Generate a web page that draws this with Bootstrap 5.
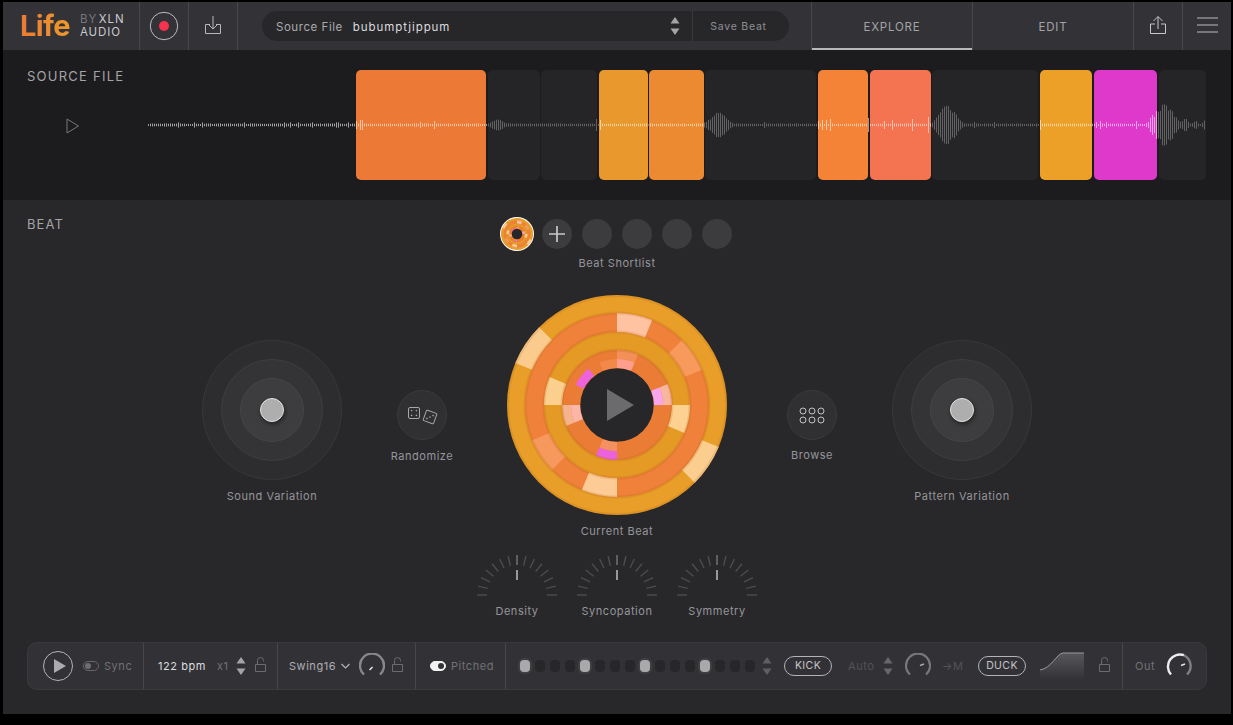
<!doctype html>
<html lang="en">
<head>
<meta charset="utf-8">
<title>Life by XLN Audio</title>
<link href="https://cdn.jsdelivr.net/npm/bootstrap@5.3.0/dist/css/bootstrap.min.css" rel="stylesheet">
<style>
html,body{height:100%;background:#000;overflow:hidden}
body{font-family:Inter,"Liberation Sans",sans-serif;font-size:11px;letter-spacing:.55px;color:#8f8f92;line-height:14px}
svg{display:block;flex:none}
.lf-app{margin:2px 0 0 3px;width:1228px;height:712px}
.lf-head{height:48px;background:#323237;color:#aaa}
.lf-cell{height:48px;border-right:1px solid #48484c;flex:none}
.lf-logo{width:137px;padding-left:17px}
.lf-life{font-size:29px;font-weight:700;letter-spacing:-.6px;line-height:30px;width:60px;background:linear-gradient(90deg,#ea7a34,#efa02a);-webkit-background-clip:text;background-clip:text;color:transparent}
.lf-brand{font-size:11.5px;line-height:13px;letter-spacing:.9px;color:#c9c9cc;word-spacing:-2.5px}
.lf-brand span{color:#77777b}
.lf-sq{width:49px}
.lf-sq48{width:49px;border-right:0}
.lf-iconup{margin-bottom:3px}
.lf-menuicon{margin-bottom:2px}
.lf-picker{flex:none;width:574px;padding:0 22px 0 24px;border-right:1px solid #48484c;height:48px}
.lf-pill{height:30px;background:#27272a;border-radius:15px;padding-left:14px;font-size:11.5px}
.lf-pilltxt{margin-top:2px}
.lf-pill b{font-weight:400;color:#dcdcdf;margin-left:10px;letter-spacing:.95px}
.lf-save{border-left:1px solid #39393c;width:97px;height:30px;color:#8f8f92;font-size:10.5px;letter-spacing:.75px;padding:2px 5px 0 0}
.lf-tab{width:161px;font-size:11.5px;letter-spacing:.8px;color:#a4a4a7;padding-top:2px}
.lf-tab-on{box-shadow:inset 0 -2px 0 #b8b8ba}
.lf-source{height:150px;background:#1c1c1e;padding:20px 25px 0 0}
.lf-title{font-size:13px;letter-spacing:1.25px;color:#a4a4a7;line-height:16px;margin-top:-2px}
.lf-srcleft{width:352px;flex:none;padding:0 0 0 24px}
.lf-playout{margin:34px 0 0 39px}
.lf-tracks{flex:1;height:110px}
.lf-blk{height:110px;border-radius:5px;background:#252527;flex:none}
.lf-wave{position:absolute;left:0;top:50px}
.lf-beat{background:#28282a;height:514px;padding:0 24px;color:#96969a}
.lf-beathead{display:grid;grid-template-columns:1fr auto 1fr;height:95px;padding-top:17px}
.lf-beattitle{font-size:13px;letter-spacing:1.1px;color:#a4a4a7}
.lf-slots{gap:10px;height:34px;margin-left:-1px;margin-right:1px}
.lf-slot{width:30px;height:30px;background:#3c3c3e}
.lf-slotfirst{width:34px;height:34px;margin-right:-2px;background:#fff;padding:1px}
.lf-sllabel{margin-top:5px;height:14px}
.lf-colside{width:150px;flex:none}
.lf-colmid{width:240px;flex:none}
.lf-colpad{padding-top:45px}
.lf-colbtn{padding-top:95px}
.lf-r1{width:140px;height:140px;background:#2d2d2f;border:1px solid #38383a}
.lf-r2{width:102px;height:102px;background:#343436;border:1px solid #3e3e40}
.lf-r3{width:64px;height:64px;background:#3d3d3f;border:1px solid #454547}
.lf-hnd{width:24px;height:24px;background:#aeaeae;border:1px solid #e2e2e2;box-shadow:1px 2px 4px rgba(0,0,0,.45)}
.lf-lab1{margin-top:9px}
.lf-roundbtn{width:50px;height:50px;background:#303033;border:1px solid #3a3a3c}
.lf-lab2{margin-top:9px}
.lf-lab2b{margin-top:8px}
.lf-lab3{margin-top:9px}
.lf-dials{margin-top:16px}
.lf-dial{width:100px}
.lf-diallab{margin-top:8px}
.lf-bar{margin-top:24px;height:48px;background:#323236;border:1px solid #3a3a3e;border-radius:10px;width:1180px;color:#717175}
.lf-bc{height:46px;border-right:1px solid #47474b;flex:none}
.lf-bc1{width:116px;padding-left:15px}
.lf-bc2{width:134px;padding-left:14px}
.lf-bc3{width:138px;padding-left:11px}
.lf-bc4{width:90px;padding-left:14px}
.lf-bc5{width:617px;padding-left:14px}
.lf-bc6{flex:1;padding-left:12px;border-right:0}
.lf-tog{width:16px;height:10px;border:1px solid #67676b;border-radius:5px;padding:0 1px}
.lf-tog i{display:block;width:6px;height:6px;border-radius:50%;background:#6e6e72}
.lf-togon{background:#f2f2f2;border-color:#f2f2f2;justify-content:end}
.lf-togon i{background:#333}
.lf-lit{color:#dcdcdf}
.lf-swing{color:#aeaeb2;width:47px;white-space:nowrap}
.lf-dim{color:#535357}
.lf-steps{gap:5px}
.lf-step{width:10px;height:12px;border-radius:4px;background:#27272a}
.lf-stepon{background:#a9a9ab;box-shadow:0 0 0 2px #3f3f42}
.lf-tagpill{width:48px;height:20px;border:1px solid #b4b4b8;border-radius:10px;color:#c4c4c8;font-size:10.5px;letter-spacing:.4px}
.lf-lockup{margin-bottom:4px}
.lf-m5{margin-left:5px}.lf-m6{margin-left:6px}.lf-m7{margin-left:7px}.lf-m8{margin-left:8px}.lf-m9{margin-left:9px}
.lf-m10{margin-left:10px}.lf-m11{margin-left:11px}.lf-m12{margin-left:12px}.lf-m14{margin-left:14px}.lf-m15{margin-left:15px}.lf-m16{margin-left:16px}
.lf-w20{width:20px}.lf-w26{width:26px}.lf-w48{width:48px}.lf-w12{width:12px}
</style>
</head>
<body>
<div class="lf-app">
  <header class="lf-head d-flex">
    <div class="lf-cell lf-logo d-flex align-items-center">
      <div class="lf-life">Life</div>
      <div class="lf-brand"><span>BY</span> XLN<br>AUDIO</div>
    </div>
    <div class="lf-cell lf-sq d-flex align-items-center justify-content-center">
      <svg width="30" height="30" viewBox="0 0 30 30"><circle cx="15" cy="15" r="13.7" fill="none" stroke="#bdbdc0" stroke-width="1"/><circle cx="15" cy="15" r="5" fill="#f6324f"/></svg>
    </div>
    <div class="lf-cell lf-sq d-flex align-items-center justify-content-center">
      <svg class="lf-iconup" width="16" height="18" viewBox="0 0 16 18" fill="none" stroke="#b8b8bb"><path d="M8 0V13M3.5 8.5L8 13l4.5-4.5M5 8.5H.5v9h15v-9H11"/></svg>
    </div>
    <div class="lf-picker d-flex align-items-center">
      <div class="lf-pill d-flex align-items-center flex-fill">
        <span class="lf-pilltxt">Source File</span><b class="lf-pilltxt">bubumptjippum</b>
        <span class="ms-auto me-2 pe-1">
          <svg width="10" height="18" viewBox="0 0 10 18" fill="#a4a4a7"><path d="M5 0l4.5 6.5h-9zM5 18l4.5-6.5h-9z"/></svg>
        </span>
        <div class="lf-save d-flex align-items-center justify-content-center">Save Beat</div>
      </div>
    </div>
    <div class="lf-cell lf-tab lf-tab-on d-flex align-items-center justify-content-center">EXPLORE</div>
    <div class="lf-cell lf-tab d-flex align-items-center justify-content-center">EDIT</div>
    <div class="lf-cell lf-sq d-flex align-items-center justify-content-center">
      <svg class="lf-iconup" width="16" height="18" viewBox="0 0 16 18" fill="none" stroke="#c8c8cb"><path d="M8 13V.8M3.5 5L8 .5 12.5 5M5 8H.5v9.5h15V8H11"/></svg>
    </div>
    <div class="lf-sq lf-sq48 d-flex align-items-center justify-content-center">
      <svg class="lf-menuicon" width="21" height="16" viewBox="0 0 21 16" stroke="#bcbcbf"><path d="M0 1h21M0 8h21M0 15h21"/></svg>
    </div>
  </header>

  <section class="lf-source d-flex position-relative">
    <div class="lf-srcleft">
      <div class="lf-title">SOURCE FILE</div>
      <div class="lf-playout"><svg width="14" height="16" viewBox="0 0 14 16"><path d="M1 1l11.5 7L1 15z" fill="none" stroke="#77777b"/></svg></div>
    </div>
    <div class="lf-tracks d-flex" id="lfTracks"></div>
    <svg class="lf-wave" id="lfWave" width="1228" height="50" viewBox="0 0 1228 50"></svg>
  </section>

  <section class="lf-beat">
    <div class="lf-beathead">
      <div class="lf-beattitle">BEAT</div>
      <div class="text-center">
        <div class="lf-slots d-flex align-items-center">
          <div class="lf-slotfirst rounded-circle"><svg class="lf-wheel" width="32" height="32" viewBox="-110 -110 220 220"></svg></div>
          <div class="lf-slot rounded-circle d-flex align-items-center justify-content-center">
            <svg width="16" height="16" viewBox="0 0 16 16" stroke="#c8c8ca" stroke-width="1.7"><path d="M8 0v16M0 8h16"/></svg>
          </div>
          <div class="lf-slot rounded-circle"></div>
          <div class="lf-slot rounded-circle"></div>
          <div class="lf-slot rounded-circle"></div>
          <div class="lf-slot rounded-circle"></div>
        </div>
        <div class="lf-sllabel">Beat Shortlist</div>
      </div>
      <div></div>
    </div>

    <div class="d-flex justify-content-center">
      <div class="lf-colside lf-colpad text-center">
        <div class="d-flex justify-content-center"><div class="lf-r1 rounded-circle d-flex align-items-center justify-content-center"><div class="lf-r2 rounded-circle d-flex align-items-center justify-content-center"><div class="lf-r3 rounded-circle d-flex align-items-center justify-content-center"><div class="lf-hnd rounded-circle"></div></div></div></div></div>
        <div class="lf-lab1">Sound Variation</div>
      </div>
      <div class="lf-colside lf-colbtn text-center">
        <div class="d-flex justify-content-center"><div class="lf-roundbtn rounded-circle d-flex align-items-center justify-content-center">
          <svg width="36" height="20" viewBox="0 0 36 20" fill="none" stroke="#a8a8ab">
            <rect x="4.5" y="2.5" width="11" height="11" rx="1.5"/>
            <g fill="#a8a8ab" stroke="none"><circle cx="7.6" cy="5.6" r=".8"/><circle cx="12.4" cy="5.6" r=".8"/><circle cx="7.6" cy="10.4" r=".8"/><circle cx="12.4" cy="10.4" r=".8"/></g>
            <g transform="rotate(20 26 12)"><rect x="20.5" y="6.5" width="11" height="11" rx="1"/><g fill="#a8a8ab" stroke="none"><circle cx="23.6" cy="14.4" r=".8"/><circle cx="26" cy="12" r=".8"/><circle cx="28.4" cy="9.6" r=".8"/></g></g>
          </svg>
        </div></div>
        <div class="lf-lab2">Randomize</div>
      </div>
      <div class="lf-colmid text-center">
        <div class="d-flex justify-content-center position-relative">
          <svg class="lf-wheel" width="220" height="220" viewBox="-110 -110 220 220"></svg>
          <svg class="position-absolute top-50 start-50 translate-middle" width="40" height="40" viewBox="0 0 40 40"><path d="M10 4L37 20 10 36z" fill="#6b6b6d"/></svg>
        </div>
        <div class="lf-lab3">Current Beat</div>
      </div>
      <div class="lf-colside lf-colbtn text-center">
        <div class="d-flex justify-content-center"><div class="lf-roundbtn rounded-circle d-flex align-items-center justify-content-center">
          <svg width="26" height="17" viewBox="0 0 26 17" fill="none" stroke="#c4c4c7"><circle cx="4" cy="4" r="3"/><circle cx="13" cy="4" r="3"/><circle cx="22" cy="4" r="3"/><circle cx="4" cy="13" r="3"/><circle cx="13" cy="13" r="3"/><circle cx="22" cy="13" r="3"/></svg>
        </div></div>
        <div class="lf-lab2b">Browse</div>
      </div>
      <div class="lf-colside lf-colpad text-center">
        <div class="d-flex justify-content-center"><div class="lf-r1 rounded-circle d-flex align-items-center justify-content-center"><div class="lf-r2 rounded-circle d-flex align-items-center justify-content-center"><div class="lf-r3 rounded-circle d-flex align-items-center justify-content-center"><div class="lf-hnd rounded-circle"></div></div></div></div></div>
        <div class="lf-lab1">Pattern Variation</div>
      </div>
    </div>

    <div class="lf-dials d-flex justify-content-center">
      <div class="lf-dial text-center"><div class="d-flex justify-content-center"><svg class="lf-dialsvg" width="82" height="42" viewBox="-41 -41 82 42"></svg></div><div class="lf-diallab">Density</div></div>
      <div class="lf-dial text-center"><div class="d-flex justify-content-center"><svg class="lf-dialsvg" width="82" height="42" viewBox="-41 -41 82 42"></svg></div><div class="lf-diallab">Syncopation</div></div>
      <div class="lf-dial text-center"><div class="d-flex justify-content-center"><svg class="lf-dialsvg" width="82" height="42" viewBox="-41 -41 82 42"></svg></div><div class="lf-diallab">Symmetry</div></div>
    </div>

    <div class="lf-bar d-flex align-items-center">
      <div class="lf-bc lf-bc1 d-flex align-items-center">
        <svg width="30" height="30" viewBox="0 0 30 30"><circle cx="15" cy="15" r="14.5" fill="none" stroke="#b4b4b8"/><path d="M11 8l12 7-12 7z" fill="#acacb0"/></svg>
        <div class="lf-tog d-flex align-items-center lf-m10"><i></i></div>
        <span class="lf-m5">Sync</span>
      </div>
      <div class="lf-bc lf-bc2 d-flex align-items-center">
        <span class="lf-lit lf-w48 text-nowrap">122 bpm</span>
        <span class="lf-m11 lf-w12">x1</span>
        <svg class="lf-m7" width="10" height="18" viewBox="0 0 10 18" fill="#a4a4a7"><path d="M5 0l4.5 6.5h-9zM5 18l4.5-6.5h-9z"/></svg>
        <svg class="lf-m9 lf-lockup" width="11" height="15" viewBox="0 0 11 15" fill="none" stroke="#6c6c70"><path d="M.5 7.5h10v7H.5zM2.5 7.5V3.5a3 3 0 0 1 6 0v1"/></svg>
      </div>
      <div class="lf-bc lf-bc3 d-flex align-items-center">
        <span class="lf-swing">Swing16</span>
        <svg class="lf-m5" width="9" height="6" viewBox="0 0 9 6" fill="none" stroke="#b4b4b8" stroke-width="1.2"><path d="M.5 1l4 4 4-4"/></svg>
        <svg class="lf-m9" width="26" height="26" viewBox="0 0 26 26" fill="none"><path d="M5 21.5A12 12 0 1 1 21 21.5" stroke="#87878b" stroke-width="2.4"/><path d="M10.5 17l3-3" stroke="#e6e6e8" stroke-width="1.6"/></svg>
        <svg class="lf-m7 lf-lockup" width="11" height="15" viewBox="0 0 11 15" fill="none" stroke="#6c6c70"><path d="M.5 7.5h10v7H.5zM2.5 7.5V3.5a3 3 0 0 1 6 0v1"/></svg>
      </div>
      <div class="lf-bc lf-bc4 d-flex align-items-center">
        <div class="lf-tog lf-togon d-flex align-items-center"><i></i></div>
        <span class="lf-m5">Pitched</span>
      </div>
      <div class="lf-bc lf-bc5 d-flex align-items-center">
        <div class="lf-steps d-flex" id="lfSteps"></div>
        <svg class="lf-m7" width="10" height="18" viewBox="0 0 10 18" fill="#5f5f63"><path d="M5 0l4.5 6.5h-9zM5 18l4.5-6.5h-9z"/></svg>
        <div class="lf-tagpill lf-m12 d-flex align-items-center justify-content-center">KICK</div>
        <span class="lf-dim lf-m16 lf-w26">Auto</span>
        <svg class="lf-m9" width="10" height="18" viewBox="0 0 10 18" fill="#67676b"><path d="M5 0l4.5 6.5h-9zM5 18l4.5-6.5h-9z"/></svg>
        <svg class="lf-m12" width="26" height="26" viewBox="0 0 26 26" fill="none"><path d="M5 21.5A12 12 0 1 1 21 21.5" stroke="#77777b" stroke-width="2.2"/><path d="M15 12.5l4-1.5" stroke="#a8a8ac" stroke-width="1.4"/></svg>
        <span class="lf-dim lf-m11 lf-w20 text-nowrap">→M</span>
        <div class="lf-tagpill lf-m16 d-flex align-items-center justify-content-center">DUCK</div>
        <svg class="lf-m14" width="44" height="28" viewBox="0 0 44 28"><defs><linearGradient id="lfCurve" x1="0" y1="0" x2="0" y2="1"><stop offset="0" stop-color="#58585c"/><stop offset="1" stop-color="#323236"/></linearGradient></defs><path d="M0 18C12 16 16 2 23 1H44V28H0z" fill="url(#lfCurve)"/><path d="M0 18C12 16 16 2 23 1H44" fill="none" stroke="#98989c"/></svg>
        <svg class="lf-m15 lf-lockup" width="11" height="15" viewBox="0 0 11 15" fill="none" stroke="#6c6c70"><path d="M.5 7.5h10v7H.5zM2.5 7.5V3.5a3 3 0 0 1 6 0v1"/></svg>
      </div>
      <div class="lf-bc lf-bc6 d-flex align-items-center">
        <span class="lf-w20">Out</span>
        <svg class="lf-m11" width="26" height="26" viewBox="0 0 26 26" fill="none"><path d="M21 21.5A12 12 0 0 0 18 2.2" stroke="#7f7f83" stroke-width="2.4"/><path d="M5 21.5A12 12 0 0 1 18 2.2" stroke="#ececee" stroke-width="2.4"/><path d="M15 12.5l4-1.5" stroke="#e6e6e8" stroke-width="1.4"/></svg>
      </div>
    </div>
  </section>
</div>

<script src="https://cdn.jsdelivr.net/npm/bootstrap@5.3.0/dist/js/bootstrap.bundle.min.js"></script>
<script>
(function(){
  /* Track blocks: [left x, right x, colour or null] in page coordinates */
  var blocks=[[356,486,'#ec7a36'],[487.5,539.5,null],[541,597,null],[598.5,647.5,'#e8982c'],[649,703.5,'#eb8a30'],[705,815.5,null],[817.5,868,'#f58337'],[869.5,930.5,'#f47350'],[932,1038,null],[1039.5,1092,'#eda028'],[1094,1157,'#de39ca'],[1158.5,1206,null]];
  var host=document.getElementById('lfTracks'),prev=355;
  blocks.forEach(function(b){
    var d=document.createElement('div');
    d.className='lf-blk';
    d.style.width=(b[1]-b[0])+'px';
    d.style.marginLeft=(b[0]-prev)+'px';
    prev=b[1];
    if(b[2])d.style.background=b[2];
    host.appendChild(d);
  });

  /* Waveform */
  var seed=7;function rnd(){seed=(seed*16807)%2147483647;return seed/2147483647;}
  var bursts=[[497,7,7],[718,13,11],[947,21,11],[1164,22,12],[1185,7,4],[1195,5,3],[1204,6,2]];
  var ticks={357:4,361:5,362:5,421:3,434:4,597:6,600:5,601:3,818:4,823:5,827:5,830:6,868:7,884:4,893:5,913:6,929:8,1040:5,1096:3,1100:4,1152:10,1137:4,1150:7,1106:3,765:3,994:3,975:3};
  var p={a:'',b:'',c:''};
  for(var x=148;x<=1205;x+=2){
    var amp=.9+rnd()*.7,i;
    bursts.forEach(function(s){
      var d=(x-s[0])/s[2];
      var v=s[1]*Math.exp(-d*d)*(.72+.28*rnd());
      if(v>amp)amp=v;
    });
    if(ticks[x]||ticks[x+1])amp=Math.max(amp,ticks[x]||ticks[x+1]);
    if(x<356&&rnd()<.04)amp=2.6;
    var cls='c';
    if(x<356)cls='a';
    for(i=0;i<blocks.length;i++){if(x>=blocks[i][0]&&x<=blocks[i][1]&&blocks[i][2])cls='b';}
    var px=x-3+.5;
    p[cls]+='M'+px+' '+(25-amp).toFixed(1)+'V'+(25+amp).toFixed(1);
  }
  document.getElementById('lfWave').innerHTML=
    '<path d="'+p.a+'" stroke="#a4a4a6" fill="none"/>'+
    '<path d="'+p.b+'" stroke="#ffffff" stroke-opacity=".55" fill="none"/>'+
    '<path d="'+p.c+'" stroke="#626264" fill="none"/>';

  /* Beat wheel: rings divided into 22.5 degree steps, clockwise from the top */
  function pt(r,a){a=(a-90)*Math.PI/180;return (r*Math.cos(a)).toFixed(2)+' '+(r*Math.sin(a)).toFixed(2);}
  function seg(r1,r2,a,b,f){
    var l=(b-a)>180?1:0;
    return '<path fill="'+f+'" d="M'+pt(r2,a)+'A'+r2+' '+r2+' 0 '+l+' 1 '+pt(r2,b)+'L'+pt(r1,b)+'A'+r1+' '+r1+' 0 '+l+' 0 '+pt(r1,a)+'Z"/>';
  }
  var ringFill=function(r,f){return '<circle r="'+r+'" fill="'+f+'"/>';};
  var w=ringFill(110,'#e89e28')+ringFill(92,'#f0813a')+ringFill(73,'#e69a26')+ringFill(55,'#ea7c36');
  [[292.5,315,92,110,'#fbcb8e'],[112.5,135,92,110,'#fbcd8f'],
   [0,22.5,73,92,'#ffc3a2'],[45,67.5,73,92,'#f79a5c'],[225,247.5,73,92,'#f7985c'],[180,202.5,73,92,'#fdcc96'],
   [270,292.5,55,73,'#fbd08e'],[90,112.5,55,73,'#fcd191'],
   [0,22.5,46,55,'#f29058'],[0,22.5,37,46,'#fd9e8e'],[337.5,360,37,46,'#f4884a'],
   [296,322,37,46,'#ee62dc'],[67.5,90,46,55,'#f8b6a0'],[67.5,90,37,46,'#f8a5ee'],
   [247.5,270,46,55,'#f6b48e'],[247.5,270,37,46,'#fbb6a8'],
   [180,202.5,46,55,'#ec62dc'],[180,202.5,37,46,'#f59060']
  ].forEach(function(s){w+=seg(s[2],s[3],s[0],s[1],s[4]);});
  [[109,2],[92,3],[73,3],[55,3]].forEach(function(r){w+='<circle r="'+r[0]+'" fill="none" stroke="#a05a10" stroke-opacity=".16" stroke-width="'+r[1]+'"/>';});
  w+=ringFill(36.7,'#27272a');
  document.querySelectorAll('.lf-wheel').forEach(function(s){s.innerHTML=w;});

  /* Dial ticks */
  var t='';
  for(var k=-7;k<=7;k++){
    var an=k*90/7*Math.PI/180,sn=Math.sin(an),cs=Math.cos(an);
    t+='<path d="M'+(30*sn).toFixed(2)+' '+(-30*cs).toFixed(2)+'L'+(40*sn).toFixed(2)+' '+(-40*cs).toFixed(2)+'" stroke="'+(k===0?'#77777a':'#4c4c4f')+'" stroke-width="1.4"/>';
  }
  t+='<path d="M0 -25V-15" stroke="#b4b4b6" stroke-width="1.6"/>';
  document.querySelectorAll('.lf-dialsvg').forEach(function(s){s.innerHTML=t;});

  /* Step row */
  var st=document.getElementById('lfSteps');
  for(var n=0;n<16;n++){
    var e=document.createElement('div');
    e.className='lf-step'+(n%4===0?' lf-stepon':'');
    st.appendChild(e);
  }
})();
</script>
</body>
</html>
